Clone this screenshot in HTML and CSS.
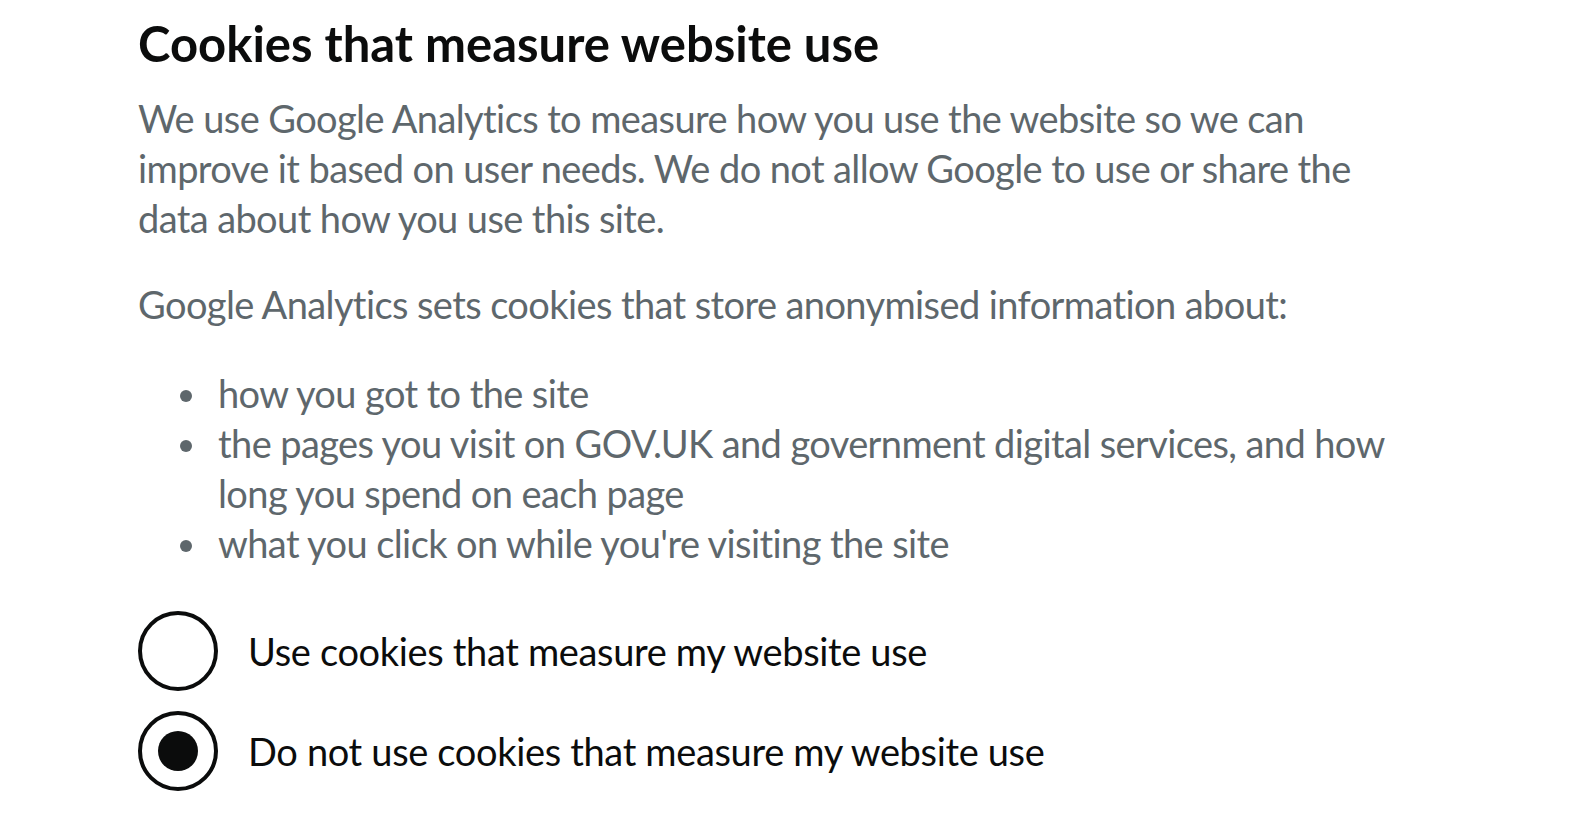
FILE: index.html
```html
<!DOCTYPE html>
<html lang="en">
<head>
<meta charset="utf-8">
<title>Cookies that measure website use</title>
<link rel="stylesheet" href="styles.css">
</head>
<body>
<main class="page">
  <h2 class="heading">Cookies that measure website use</h2>
  <p class="body">We use Google Analytics to measure how you use the website so we can improve it based on user needs. We do not allow Google to use or share the data about how you use this site.</p>
  <p class="body last">Google Analytics sets cookies that store anonymised information about:</p>
  <ul class="list">
    <li>how you got to the site</li>
    <li>the pages you visit on GOV.UK and government digital services, and how long you spend on each page</li>
    <li>what you click on while you're visiting the site</li>
  </ul>
  <div class="radios">
    <div class="radio">
      <input class="radio-input" type="radio" id="usage-yes" name="usage" value="yes">
      <label class="radio-label" for="usage-yes">Use cookies that measure my website use</label>
    </div>
    <div class="radio">
      <input class="radio-input" type="radio" id="usage-no" name="usage" value="no" checked>
      <label class="radio-label" for="usage-no">Do not use cookies that measure my website use</label>
    </div>
  </div>
</main>
</body>
</html>
```
FILE: styles.css
```css
html, body {
  margin: 0;
  padding: 0;
  background: #ffffff;
}
body {
  font-family: Lato, "Noto Sans", sans-serif;
  color: #0b0c0c;
}
.page {
  padding: 13px 0 0 138px;
  width: 1272px;
}
.heading {
  font-size: 49px;
  line-height: 60px;
  font-weight: 700;
  margin: 0 0 20px;
  color: #0b0c0c;
}
.body {
  font-size: 38px;
  line-height: 50px;
  letter-spacing: -0.6px;
  color: #5e676c;
  margin: 0 0 36px;
}
.body.last {
  margin-bottom: 39px;
}
.list {
  font-size: 38px;
  line-height: 50px;
  letter-spacing: -0.6px;
  color: #5e676c;
  margin: 0 0 43px;
  padding-left: 80px;
  list-style: none;
}
.list li {
  position: relative;
}
.list li::before {
  content: "";
  position: absolute;
  left: -38px;
  top: 22px;
  width: 12px;
  height: 12px;
  border-radius: 50%;
  background: #5e676c;
}
.radios {
  display: flex;
  flex-direction: column;
  gap: 20px;
}
.radio {
  position: relative;
  display: flex;
  align-items: center;
  min-height: 80px;
  padding-left: 80px;
}
.radio-input {
  position: absolute;
  left: 0;
  top: 0;
  width: 80px;
  height: 80px;
  margin: 0;
  opacity: 0;
}
.radio-label {
  font-size: 38px;
  line-height: 50px;
  letter-spacing: -0.34px;
  padding: 0 30px;
  position: relative;
  color: #0b0c0c;
}
.radio-label::before {
  content: "";
  position: absolute;
  left: -80px;
  top: -15px;
  width: 80px;
  height: 80px;
  box-sizing: border-box;
  border: 4px solid #0b0c0c;
  border-radius: 50%;
  background: #fff;
}
.radio-input:checked + .radio-label::after {
  content: "";
  position: absolute;
  left: -60px;
  top: 5px;
  width: 40px;
  height: 40px;
  border-radius: 50%;
  background: #0b0c0c;
}
```
